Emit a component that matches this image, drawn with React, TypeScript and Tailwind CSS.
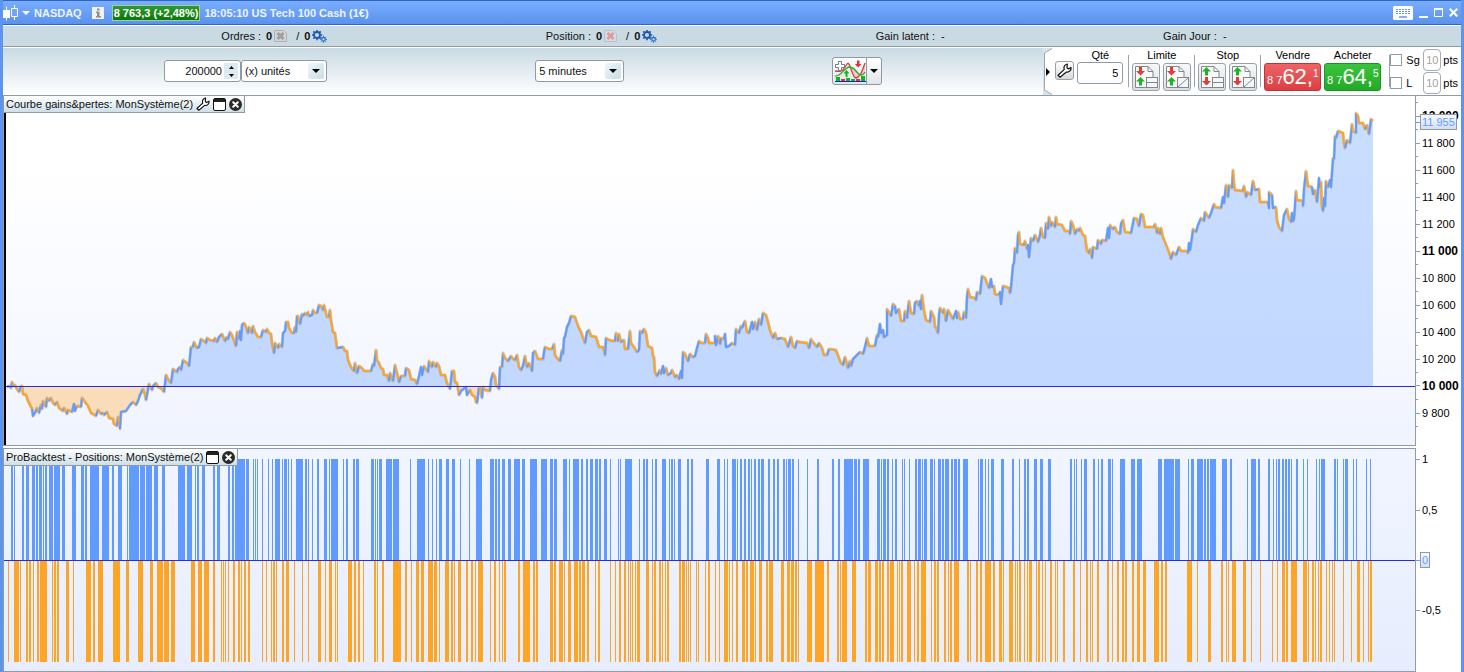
import React from "react";

const EQUITY =
  "7,387 9,386 11,388 12,382 14,386 15,385 17,389 19,392 21,386 22,386 23,394 26,395 28,401 32,409 33,416 36,411 37,408 39,413 41,405 42,409 43,401 46,407 47,398 49,401 51,398 53,403 55,405 57,402 59,408 63,411 64,408 67,414 68,410 72,412 74,404 75,411 77,406 81,407 82,398 85,402 88,406 91,413 93,414 96,416 98,410 101,414 103,413 104,415 107,412 109,418 113,419 114,424 117,426 118,417 120,429 121,412 126,411 130,405 133,402 136,405 138,401 140,395 143,389 145,395 146,400 147,395 149,384 152,390 153,386 156,383 158,387 162,389 164,392 166,375 168,379 171,383 173,369 177,372 178,369 180,367 181,370 183,360 187,363 189,366 191,347 193,347 194,342 197,348 199,347 201,339 204,341 206,343 207,338 210,340 214,341 215,338 217,342 219,337 222,334 225,341 227,337 228,339 230,332 232,335 236,346 237,332 239,339 240,331 241,340 242,325 244,323 246,327 248,333 249,327 252,333 253,326 255,332 258,337 261,337 263,330 266,332 267,329 269,333 271,334 272,343 274,353 275,343 278,348 279,344 282,347 283,333 285,331 286,322 288,322 289,328 292,333 294,333 295,327 296,332 297,316 298,316 300,324 302,314 303,316 305,313 307,315 308,312 309,316 312,315 313,310 315,313 317,313 319,305 321,306 323,310 324,305 326,313 327,317 329,317 330,310 331,320 333,332 335,333 337,348 343,347 345,351 347,351 348,360 351,367 354,371 355,363 357,373 359,366 362,368 364,371 371,371 373,364 374,366 376,350 377,360 379,363 381,368 383,369 384,375 387,375 389,381 390,373 393,381 395,365 397,373 399,382 401,376 405,376 406,368 409,370 411,379 415,380 417,384 419,376 421,367 422,375 424,366 428,372 429,361 432,367 433,362 436,367 437,363 439,366 441,375 445,375 447,383 450,389 452,371 454,371 455,382 457,383 459,395 461,391 466,387 467,395 470,390 472,395 475,397 476,402 477,403 479,388 480,388 482,398 483,387 485,390 490,391 491,380 493,373 495,377 496,385 499,389 500,367 502,367 503,353 505,358 508,361 511,356 513,359 515,360 517,355 519,367 521,370 523,366 525,356 527,367 529,363 531,368 532,371 533,353 535,351 538,359 543,359 544,352 545,347 549,349 552,349 554,344 555,355 557,358 560,361 562,350 563,354 564,338 565,337 567,327 569,323 571,316 575,317 577,323 579,328 581,332 585,343 587,332 589,330 591,336 596,337 597,340 599,347 603,347 605,355 606,338 609,340 613,341 615,341 616,333 618,341 619,334 621,342 624,340 625,349 628,349 630,331 631,343 634,347 637,352 639,350 640,331 642,333 644,329 646,333 648,346 652,348 653,356 654,357 655,372 657,376 660,370 661,374 663,366 664,373 666,368 668,375 671,373 672,370 675,377 677,375 679,379 681,371 682,378 683,352 685,354 688,361 690,354 693,357 695,356 697,348 699,341 701,343 705,343 706,334 708,338 709,343 715,343 715,336 716,345 718,336 720,344 721,338 724,339 725,334 726,347 729,346 732,343 735,345 736,329 739,333 741,326 742,328 745,321 747,332 749,333 752,322 753,329 755,322 757,330 759,319 761,325 763,313 766,315 768,322 770,330 773,338 775,333 777,339 781,338 785,339 788,347 791,337 793,346 795,348 797,341 799,342 807,343 809,348 811,339 813,342 817,347 819,343 822,348 824,355 827,355 829,349 836,350 839,358 841,363 843,365 845,357 848,368 850,361 851,366 853,359 856,356 859,353 860,352 863,354 865,347 867,338 869,346 875,346 877,335 878,337 880,324 881,333 883,330 884,337 887,335 887,309 891,316 893,304 895,306 896,313 899,309 901,321 904,321 905,311 907,318 909,301 911,313 914,314 915,303 917,301 919,306 920,301 921,309 922,295 924,310 926,320 930,322 931,311 934,317 935,327 936,327 938,333 939,315 940,308 943,313 944,309 946,321 948,310 953,319 956,311 957,318 958,312 960,319 963,319 964,312 966,318 967,297 968,289 970,297 975,298 976,300 977,292 980,294 982,276 985,278 989,288 991,279 992,287 994,286 995,294 999,295 1000,292 1001,304 1003,286 1009,288 1010,293 1011,287 1013,265 1014,263 1015,248 1017,253 1018,235 1019,232 1020,244 1024,245 1025,241 1027,249 1028,245 1029,257 1031,238 1033,241 1035,235 1038,242 1040,235 1041,228 1043,237 1045,238 1046,223 1048,229 1049,217 1051,226 1052,222 1054,225 1055,227 1056,217 1057,224 1062,225 1065,231 1069,231 1070,234 1071,221 1073,225 1075,234 1077,229 1079,231 1080,228 1083,235 1085,236 1087,251 1089,253 1090,249 1092,258 1093,247 1097,249 1098,240 1101,244 1102,240 1106,241 1108,228 1109,238 1110,225 1113,229 1115,227 1117,232 1120,234 1121,224 1123,220 1125,232 1131,233 1134,218 1137,219 1139,226 1141,214 1143,215 1145,227 1154,227 1155,224 1157,233 1158,228 1160,234 1161,228 1163,237 1167,247 1169,252 1171,259 1173,252 1176,255 1179,247 1181,251 1187,251 1188,253 1189,243 1190,250 1192,237 1193,229 1196,232 1198,225 1201,218 1204,221 1205,212 1209,218 1211,213 1214,204 1215,207 1221,208 1223,197 1224,203 1226,185 1228,197 1229,185 1232,188 1233,170 1234,183 1235,190 1243,191 1244,186 1246,197 1247,192 1251,195 1253,181 1255,190 1259,189 1260,202 1268,202 1269,208 1269,192 1272,195 1273,208 1276,207 1277,220 1279,227 1282,231 1284,215 1287,209 1289,219 1291,222 1292,213 1293,221 1294,219 1296,191 1297,200 1303,201 1303,206 1304,189 1306,171 1308,186 1312,187 1313,194 1315,190 1317,202 1319,178 1320,187 1321,182 1322,207 1323,211 1324,198 1325,206 1326,181 1328,187 1330,180 1331,187 1333,158 1334,159 1335,136 1336,138 1338,131 1343,133 1344,143 1345,148 1347,140 1350,143 1352,124 1353,131 1356,133 1356,113 1358,116 1359,123 1363,123 1365,129 1367,125 1369,134 1371,119 1373,121";

const LONGS =
  "11 2,14 1,22 2,26 3,32 3,36 2,39 3,43 1,45 2,49 4,54 6,62 3,72 4,81 3,85 2,90 9,102 7,112 2,118 4,127 1,129 10,140 5,146 6,154 4,162 3,178 7,187 5,195 1,197 2,202 3,213 2,217 3,228 2,232 2,235 10,246 3,253 1,255 1,257 1,262 1,268 1,272 1,275 5,282 1,284 3,288 1,291 1,296 7,305 2,308 1,312 1,317 2,324 3,329 1,331 7,343 1,346 2,353 2,356 3,371 3,375 1,377 1,379 3,386 6,393 6,410 1,417 8,428 1,432 1,436 1,439 3,446 3,452 3,460 1,469 1,476 6,490 4,495 2,498 2,502 3,508 3,514 6,522 3,530 7,541 6,550 3,554 3,563 4,569 1,573 6,581 2,586 2,590 3,595 3,599 2,604 3,610 1,618 1,620 1,625 7,639 1,643 2,646 2,652 1,655 2,662 4,669 1,671 2,674 1,678 3,687 2,691 2,706 3,717 3,724 1,727 1,732 4,737 1,740 2,744 2,748 2,751 1,754 2,758 2,761 3,768 2,773 2,777 2,783 2,786 1,788 3,792 2,798 1,807 1,817 2,832 2,838 2,844 9,854 3,858 2,863 6,877 3,881 1,883 3,887 2,892 1,895 2,902 1,904 1,909 1,915 2,918 3,922 1,924 3,930 3,934 1,938 3,942 2,945 4,951 2,954 3,958 2,963 5,978 1,980 3,985 1,988 1,991 3,1001 3,1012 2,1019 1,1024 2,1027 2,1034 3,1040 3,1048 3,1070 2,1074 1,1076 1,1081 1,1084 3,1093 2,1098 1,1101 2,1108 3,1112 1,1120 5,1131 4,1137 5,1158 4,1164 10,1175 5,1188 1,1191 3,1197 6,1204 2,1207 2,1210 6,1222 5,1230 2,1247 1,1251 5,1258 2,1268 2,1273 1,1276 1,1278 2,1282 2,1285 2,1288 2,1291 1,1296 2,1303 1,1307 1,1316 1,1319 1,1321 4,1334 2,1337 1,1343 1,1345 3,1353 1,1356 1,1366 1,1370 1";

const SHORTS =
  "8 1,14 5,20 1,26 2,29 2,33 1,37 2,40 7,52 1,54 2,57 2,66 3,73 1,86 5,93 2,98 5,113 7,126 3,138 5,150 3,157 6,164 5,171 4,191 4,198 4,204 5,213 2,221 1,223 1,225 1,228 1,233 2,238 2,241 1,244 2,248 2,262 1,266 1,271 1,273 2,276 1,282 2,286 3,294 1,302 1,308 1,318 3,325 1,329 3,335 1,337 1,348 4,354 2,358 2,363 1,374 2,377 1,382 2,393 8,405 2,411 1,416 3,421 3,428 5,434 3,439 1,445 4,451 2,454 1,458 3,466 2,471 2,475 1,478 5,490 1,494 2,499 1,502 1,504 2,518 2,523 7,533 2,536 2,550 3,554 2,559 4,564 1,568 3,574 4,579 2,582 3,587 2,595 1,598 2,610 1,615 1,619 2,624 2,628 1,630 1,632 1,635 1,637 3,646 3,652 1,654 2,659 2,662 1,665 1,667 2,679 2,682 3,686 1,688 1,690 1,696 1,698 1,705 1,708 2,715 1,719 1,724 4,729 1,732 1,736 2,742 3,746 2,750 4,755 1,759 3,766 2,769 4,781 3,787 3,791 3,795 2,798 1,807 5,815 9,827 2,837 2,840 1,842 5,852 4,865 2,868 3,875 3,879 2,882 2,887 2,890 4,897 1,899 1,901 2,907 4,914 1,917 2,921 5,931 1,934 2,937 2,944 2,948 1,950 2,954 5,967 2,970 1,976 2,980 2,985 6,993 2,999 3,1003 1,1009 4,1015 1,1017 1,1019 2,1024 1,1027 1,1029 3,1036 1,1038 2,1042 1,1045 1,1050 2,1055 1,1057 1,1063 2,1073 2,1080 1,1086 2,1090 1,1092 1,1097 2,1107 2,1112 1,1117 2,1122 2,1125 2,1132 2,1137 3,1143 3,1154 5,1161 2,1165 2,1187 5,1197 1,1208 3,1221 2,1226 1,1228 1,1232 4,1243 3,1251 1,1260 1,1272 1,1277 1,1282 3,1286 2,1291 6,1303 4,1308 1,1312 2,1315 1,1318 1,1320 2,1326 1,1329 1,1332 1,1334 1,1343 1,1351 1,1357 3,1363 1,1368 1,1370 2";

const points = EQUITY.split(" ").map((p) => p.split(",").map(Number));
const linePath = "M" + EQUITY.split(" ").join("L");
const areaPath = `M${points[0][0]},386L${EQUITY.split(" ").join("L")}L1373,386Z`;

type Run = { gain: boolean; d: string };

// Consecutive steps of the same colour share one path, in drawing order.
function buildRuns(): Run[] {
  const runs: Run[] = [];
  for (let i = 1; i < points.length; i++) {
    const [x0, y0] = points[i - 1];
    const [x1, y1] = points[i];
    const next = points[i + 1];
    const spike = x1 - x0 <= 1 && y1 - y0 >= 6 && next !== undefined && next[1] < y1;
    const gain = y1 < y0 || spike;
    const last = runs[runs.length - 1];
    if (last && last.gain === gain) last.d += `L${x1},${y1}`;
    else runs.push({ gain, d: `M${x0},${y0}L${x1},${y1}` });
  }
  return runs;
}
const runs = buildRuns();

const bars = (data: string, y: number, h: number) =>
  data
    .split(",")
    .map((b) => {
      const [x, w] = b.split(" ");
      return `M${x},${y}h${w}v${h}h-${w}z`;
    })
    .join("");

function Gears() {
  const teeth = (cx: number, cy: number, r: number, n: number) =>
    Array.from({ length: n }, (_, i) => {
      const a = (i * 2 * Math.PI) / n;
      return `M${cx + Math.cos(a) * r},${cy + Math.sin(a) * r}L${cx + Math.cos(a) * (r + 1.8)},${cy + Math.sin(a) * (r + 1.8)}`;
    }).join("");
  return (
    <svg width="15" height="13" viewBox="0 0 15 13" fill="none" aria-hidden="true">
      <circle cx="5" cy="5" r="3" stroke="#1d55b8" strokeWidth="1.8" />
      <path d={teeth(5, 5, 3.4, 8)} stroke="#1d55b8" strokeWidth="1.6" />
      <circle cx="11.5" cy="9.3" r="1.8" stroke="#2f78cc" strokeWidth="1.3" />
      <path d={teeth(11.5, 9.3, 1.8, 8)} stroke="#2f78cc" strokeWidth="1" />
    </svg>
  );
}

function CancelDoc({ red }: { red?: boolean }) {
  return (
    <svg width="13" height="12" viewBox="0 0 13 12" aria-hidden="true">
      <path d="M.5.5h9l3 3v8H.5z" fill={red ? "#d6dbe4" : "#d5d5d5"} stroke={red ? "#b4c1ce" : "#b0b0b0"} />
      <path d="M3.5 3l6 6M9.5 3l-6 6" stroke={red ? "#e39a9f" : "#9f9f9f"} strokeWidth="3" />
    </svg>
  );
}

function Wrench({ size }: { size: number }) {
  return (
    <svg width={size} height={size} viewBox="0 0 15 15" fill="#fff" stroke="#111" strokeWidth="1.2" strokeLinejoin="round" aria-hidden="true">
      <path d="M1 12.300 7.200 6.600C6.500 4 7.800 1.700 10.300 1L10 4.800l1.400 1.200L14 4.500c.4 2.600-1.700 5-4.600 4.500L3 14.200z" />
    </svg>
  );
}

function WindowIcon() {
  return (
    <svg width="13" height="13" viewBox="0 0 13 13" aria-hidden="true">
      <rect x=".5" y=".5" width="12" height="12" rx="1.5" fill="#fff" stroke="#111" />
      <path d="M1 1h11v3H1z" fill="#222" />
    </svg>
  );
}

function CloseIcon() {
  return (
    <svg width="13" height="13" viewBox="0 0 13 13" aria-hidden="true">
      <circle cx="6.5" cy="6.5" r="6.5" fill="#2b2b2b" />
      <path d="M4.200 4.200l4.600 4.600M8.800 4.200L4.200 8.800" stroke="#fff" strokeWidth="2" strokeLinecap="round" />
    </svg>
  );
}

const Caret = () => (
  <svg width="8" height="4" viewBox="0 0 8 4" aria-hidden="true">
    <path d="M0 0h8L4 4z" fill="#000" />
  </svg>
);

function OrderIcon({ down, slash }: { down?: boolean; slash?: boolean }) {
  const downArrow = "M4 0h3v4h3L5.500 8.500 1 4h3z";
  const upArrow = "M5.500 0L10 4.500H7V8.500H4V4.500H1z";
  return (
    <svg width="24" height="24" viewBox="0 0 24 24" aria-hidden="true">
      <path d="M1.500 22.500v-21H14l5 5v16z" fill="#fafafa" stroke="#7d8890" />
      <path d="M14 1.500v5h5" fill="none" stroke="#7d8890" />
      <path d={down ? downArrow : upArrow} transform="translate(1 2)" fill={down ? "#e53a3a" : "#1fb324"} />
      <path d={down ? upArrow : downArrow} transform="translate(1 12)" fill={down ? "#1fb324" : "#e53a3a"} />
      <rect x="12.5" y="12.500" width="11" height="10" fill="#f4f6f7" stroke="#7d8890" />
      <path d={slash ? "M13 22l10-9" : "M12 17.500h11"} stroke="#7d8890" />
    </svg>
  );
}

function SelectBox({ label, value, options }: { label: string; value: string; options: string[] }) {
  return (
    <div className="relative flex h-[22px] w-full items-center rounded-[3px] border border-[#8f9ba4] bg-white">
      <select aria-label={label} defaultValue={value} className="h-full w-full appearance-none bg-transparent pl-[3px] pr-5 text-[11px] outline-none">
        {options.map((o) => (
          <option key={o}>{o}</option>
        ))}
      </select>
      <span className="pointer-events-none absolute inset-y-0.5 right-0.5 flex w-4 items-center justify-center rounded-[2px] bg-linear-to-br from-[#eef7fa] to-[#c8dde6]">
        <Caret />
      </span>
    </div>
  );
}

function OrderGroup({ title, down }: { title: string; down?: boolean }) {
  return (
    <div className="flex flex-col items-center">
      <span className="h-[15px] leading-[14px]">{title}</span>
      <div className="flex gap-[3px]">
        {[false, true].map((slash) => (
          <button
            key={String(slash)}
            aria-label={`${title} ${slash ? "sans" : "avec"} quantité`}
            className="flex size-7 items-center justify-center rounded-[3px] border border-[#98a1a7] bg-linear-to-b from-[#f8f8f8] to-[#dcdfe1]"
          >
            <OrderIcon down={down} slash={slash} />
          </button>
        ))}
      </div>
    </div>
  );
}

function Price({ title, big, sup, tone }: { title: string; big: string; sup: string; tone: string }) {
  return (
    <div className="flex flex-col items-center">
      <span className="h-[15px] leading-[14px]">{title}</span>
      <button
        aria-label={`${title} 8 7${big}${sup}`}
        className={`flex h-7 w-[57px] items-end justify-center rounded-[3px] border pb-[3px] text-white ${tone}`}
      >
        <span className="text-[11px] leading-[13px]">8 7</span>
        <span className="text-[22px] leading-[21px]">{big}</span>
        <span className="self-start pt-1 text-[10px] leading-[12px]">{sup}</span>
      </button>
    </div>
  );
}

function PtsRow({ name }: { name: string }) {
  return (
    <div className="flex items-center">
      <label className="flex w-[33px] items-center gap-1">
        <input type="checkbox" className="size-3 shrink-0 appearance-none border border-[#8f9ba4] bg-white" />
        {name}
      </label>
      <label className="flex items-center gap-0.5">
        <input
          type="text"
          defaultValue="10"
          className="h-[22px] w-[18px] rounded-[4px] border border-[#a3adb5] bg-white text-center text-[11px] text-[#a2a2a2] outline-none"
        />
        pts
      </label>
    </div>
  );
}

const Divider = () => <span className="mt-[7px] h-8 w-px bg-[#98a4ad]" />;

type Tick = { at: number; label?: string; bold?: boolean };

function Axis({ ticks, marker }: { ticks: Tick[]; marker: { at: number; label: string } }) {
  return (
    <div className="relative w-[45px] shrink-0 bg-white text-black">
      {ticks.map((t) => (
        <div key={t.at} className="absolute left-0 flex h-0 items-center gap-0.5" style={{ top: `${t.at}%` }}>
          <span className={t.label ? "h-px w-1 bg-[#909ba5]" : "h-px w-0.5 bg-[#909ba5]"} />
          {t.label && (
            <span className={t.bold ? "whitespace-nowrap text-[12px] font-bold" : "whitespace-nowrap text-[11px]"}>{t.label}</span>
          )}
        </div>
      ))}
      <div className="absolute left-0 flex h-0 items-center" style={{ top: `${marker.at}%` }}>
        <span className="h-px w-1 bg-[#629bff]" />
        <span className="h-4 whitespace-nowrap border border-[#8f9ba4] bg-linear-to-b from-[#f6f9ff] to-[#d3dff2] px-px text-[11px] leading-[14px] text-[#629bff]">
          {marker.label}
        </span>
      </div>
    </div>
  );
}

const equityY = (y: number) => ((y - 96) / 350) * 100;
const equityTicks: Tick[] = [];
for (let i = 0; i <= 24; i++) {
  const value = 12100 - i * 100;
  const y = 386 - ((value - 10000) * 135) / 1000;
  const major = value % 200 === 0 && value > 9600;
  equityTicks.push({
    at: equityY(y),
    label: major ? `${Math.floor(value / 1000)} ${String(value % 1000).padStart(3, "0")}` : undefined,
    bold: value % 1000 === 0,
  });
}

const posY = (y: number) => ((y - 448) / 224) * 100;
const posTicks: Tick[] = [
  { at: posY(459), label: "1" },
  { at: posY(510), label: "0,5" },
  { at: posY(610), label: "-0,5" },
];

function PanelTitle({ text, wrench }: { text: string; wrench?: boolean }) {
  return (
    <div className="absolute left-0 top-0 flex h-[17px] items-center gap-[3px] border-b border-r border-[#8f9ba4] bg-linear-to-b from-white to-[#cfdfe7] px-0.5">
      <h2 className="text-[11px] leading-4">{text}</h2>
      {wrench && (
        <button aria-label="Paramètres">
          <Wrench size={14} />
        </button>
      )}
      <button aria-label="Agrandir">
        <WindowIcon />
      </button>
      <button aria-label="Fermer le graphique">
        <CloseIcon />
      </button>
    </div>
  );
}

export default function App() {
  return (
    <div className="flex h-screen flex-col overflow-hidden border-x-[3px] border-[#5c94ee] bg-white font-['Liberation_Sans',Arial,sans-serif] text-[11px] leading-[14px] text-[#111]">
      <header className="flex h-[25px] shrink-0 items-center border-y border-[#2f66c0] bg-linear-to-b from-[#78adff] to-[#5b92ec] font-bold text-[#eef4ff]">
        <svg width="16" height="18" viewBox="0 0 16 18" fill="none" aria-hidden="true">
          <path d="M3.500 2.500v14" stroke="#fff" />
          <path d="M0 6h7v8H0z" fill="#fff" />
          <path d="M11.500 1v15" stroke="#fff" />
          <path d="M8.500 4.500h6v8h-6z" fill="#6ea4fa" stroke="#fff" />
        </svg>
        <button aria-label="Menu" className="flex items-center gap-1 pl-[3px]">
          <svg width="8" height="4" viewBox="0 0 8 4" aria-hidden="true">
            <path d="M0 0h8L4 4z" fill="#fff" />
          </svg>
          <span>NASDAQ</span>
        </button>
        <svg className="ml-2.5" width="12" height="12" viewBox="0 0 12 12" aria-hidden="true">
          <path d="M0 0h12v12H0z" fill="#f1f1ee" />
          <path d="M5 1.500h2.500v2H5zM4 4.500h3.500V9H9v1.500H4V9h1V6H4z" fill="#8a8f94" />
        </svg>
        <span className="ml-2 border border-[#9fd0a0] bg-linear-to-b from-[#2e9a30] to-[#077807] px-px text-white">8 763,3 (+2,48%)</span>
        <span className="ml-1 flex-1 whitespace-nowrap">18:05:10 US Tech 100 Cash (1€)</span>
        <div className="flex items-center gap-1.5 pr-[3px]">
          <button aria-label="Clavier">
            <svg width="20" height="14" viewBox="0 0 20 14" aria-hidden="true">
              <rect width="20" height="14" rx="1.5" fill="#fff" />
              <path d="M3 3.500h14M3 5.500h14M3 7.500h14" stroke="#6096f0" strokeDasharray="2 1" />
              <path d="M6 11h8" stroke="#6096f0" strokeWidth="1.5" />
            </svg>
          </button>
          <button aria-label="Réduire">
            <svg width="9" height="10" viewBox="0 0 9 10" aria-hidden="true">
              <path d="M0 9h9" stroke="#fff" strokeWidth="2" />
            </svg>
          </button>
          <button aria-label="Agrandir la fenêtre">
            <svg width="9" height="9" viewBox="0 0 9 9" aria-hidden="true">
              <path d="M.5 1h8v7.500h-8z" fill="none" stroke="#fff" />
              <path d="M0 1h9" stroke="#fff" strokeWidth="2" />
            </svg>
          </button>
          <button aria-label="Fermer">
            <svg width="9" height="9" viewBox="0 0 9 9" aria-hidden="true">
              <path d="M.7.7l7.600 7.600M8.300.7L.7 8.300" stroke="#fff" strokeWidth="2" />
            </svg>
          </button>
        </div>
      </header>

      <section className="mt-px flex h-[21px] shrink-0 items-center justify-evenly border-b border-[#909ba5] bg-[#c9dae3] pr-4">
        <div className="flex items-center gap-0.5">
          <span>Ordres :</span>
          <b className="ml-[3px]">0</b>
          <CancelDoc />
          <span className="ml-[7px]">/</span>
          <b className="ml-[3px]">0</b>
          <Gears />
        </div>
        <div className="flex items-center gap-0.5">
          <span>Position :</span>
          <b className="ml-[3px]">0</b>
          <CancelDoc red />
          <span className="ml-[7px]">/</span>
          <b className="ml-[3px]">0</b>
          <Gears />
        </div>
        <span className="whitespace-pre">Gain latent :  -</span>
        <span className="whitespace-pre">Gain Jour :  -</span>
      </section>

      <section className="mt-px flex h-[48px] shrink-0 border-b border-[#909ba5] bg-linear-to-b from-[#c9dae3] to-white">
        <div className="flex flex-1 items-center justify-between px-[161px] pb-px">
          <div className="flex">
            <div className="relative flex h-[22px] w-[77px] items-center rounded-[3px] border border-[#8f9ba4] bg-white">
              <input
                type="text"
                aria-label="Nombre d'unités"
                defaultValue="200000"
                className="h-full w-full bg-transparent pr-[18px] text-right text-[11px] outline-none"
              />
              <span className="absolute inset-y-0.5 right-0.5 flex w-3.5 flex-col items-center justify-center bg-[#dcebf1]">
                <button aria-label="Augmenter" className="flex h-2 items-center">
                  <svg width="5" height="3" viewBox="0 0 5 3" aria-hidden="true">
                    <path d="M0 3h5L2.500 0z" />
                  </svg>
                </button>
                <button aria-label="Diminuer" className="flex h-2 items-center">
                  <svg width="5" height="3" viewBox="0 0 5 3" aria-hidden="true">
                    <path d="M0 0h5L2.500 3z" />
                  </svg>
                </button>
              </span>
            </div>
            <div className="w-[86px]">
              <SelectBox label="Type d'unité" value="(x) unités" options={["(x) unités", "(x) jours"]} />
            </div>
          </div>
          <div className="w-[89px]">
            <SelectBox label="Unité de temps" value="5 minutes" options={["1 minute", "5 minutes", "15 minutes"]} />
          </div>
          <div className="flex h-7 w-[50px] overflow-hidden rounded-[3px] border border-[#8f9ba4] bg-linear-to-b from-white to-[#e2e6e9]">
            <button aria-label="Indicateurs" className="flex flex-1 items-center justify-center border-r border-[#8f9ba4]">
              <svg width="32" height="24" viewBox="0 0 32 24" fill="none" aria-hidden="true">
                <path d="M2 15c5 4 8 2 11-7 4-6 5 9 10 11 4-1 5-6 8-14v9c-4 4-5 0-9-3-4-5-9-3-12 2-3 4-5 3-8 2z" fill="#f6caca" />
                <path d="M1 12c5 0 6 3 12-7 3-4 5 14 9 14 4-1 6-6 9-15" stroke="#d93a3a" strokeWidth="1.3" />
                <path d="M1 17c6 1 9-9 15-9 6 1 7 8 11 8 2 0 3-1 4-3" stroke="#2cae34" strokeWidth="1.3" />
                <path d="M4.500 2.500h3v3h3v3h-3v3h-3v-3h-3v-3h3z" fill="#fff" stroke="#6c7f92" />
                <path d="M12.500 11l3 3.500h-2V18h-2v-3.500h-2z" fill="#12b51a" />
                <path d="M24 8.500L21 5h2V1.500h2.500V5h2z" fill="#e73030" />
                <path d="M1 22.500h31" stroke="#1d1dd8" />
                <path d="M2 18h4v4H2zM12 19h4v3h-4zM17 20h4v2h-4zM27 17h4v5h-4z" fill="#12b51a" />
                <path d="M7 20h4v2H7zM22 20h4v2h-4z" fill="#e73030" />
              </svg>
            </button>
            <button aria-label="Liste des indicateurs" className="flex w-3.5 items-center justify-center">
              <Caret />
            </button>
          </div>
        </div>

        <div className="flex items-start bg-white pr-[3px] text-black">
          <button aria-label="Réduire le panneau" className="mr-[3px] h-[47px] w-[9px]">
            <svg width="9" height="47" viewBox="0 0 9 47" aria-hidden="true">
              <path d="M0 0h9L1.500 5v37L9 47H0z" fill="#d8e4ea" />
              <path d="M9 .5L1.500 5v37L9 46.500" fill="none" stroke="#9aa5ad" />
              <path d="M3 20v8l4-4z" />
            </svg>
          </button>
          <button
            aria-label="Réglages"
            className="mr-[3px] mt-[13px] flex size-[19px] items-center justify-center rounded-[3px] border border-[#98a1a7] bg-linear-to-b from-white to-[#d5dadd]"
          >
            <Wrench size={15} />
          </button>
          <label className="mr-[5px] flex w-[46px] flex-col items-center">
            <span className="h-[14px]">Qté</span>
            <input type="text" defaultValue="5" className="h-[22px] w-full rounded-[3px] border border-[#8f9ba4] bg-white px-1 text-right text-[11px] outline-none" />
          </label>
          <div className="flex items-start gap-[3px]">
            <Divider />
            <OrderGroup title="Limite" down />
            <Divider />
            <OrderGroup title="Stop" />
            <Divider />
            <Price title="Vendre" big="62," sup="1" tone="border-[#bd3338] bg-linear-to-b from-[#ee6366] to-[#dc3e42]" />
            <Price title="Acheter" big="64," sup="5" tone="border-[#189420] bg-linear-to-b from-[#3ac43c] to-[#22aa27]" />
          </div>
          <div className="ml-2 flex items-start">
            <Divider />
            <div className="mt-px flex flex-col gap-px">
              <PtsRow name="Sg" />
              <PtsRow name="L" />
            </div>
          </div>
        </div>
      </section>

      <main className="grid min-h-0 flex-1 grid-rows-[350fr_224fr] gap-0.5">
        <section className="flex min-h-0">
          <div className="relative min-w-0 flex-1 border-x border-b border-[#909ba5] bg-linear-to-b from-white from-20% to-[#f0f4ff]">
            <svg className="block h-full w-full" viewBox="4 96 1411 349" preserveAspectRatio="none" role="img" aria-label="Courbe gains et pertes">
              <clipPath id="above">
                <path d="M4 96h1411v290H4z" />
              </clipPath>
              <clipPath id="below">
                <path d="M4 386h1411v59H4z" />
              </clipPath>
              <path d={areaPath} fill="#629bff" fillOpacity=".34" clipPath="url(#above)" />
              <path d={areaPath} fill="#f9dcb9" clipPath="url(#below)" />
              <g fill="none" strokeLinejoin="round">
                <path d={linePath} stroke="#8d8d8d" strokeOpacity=".45" strokeWidth="3" vectorEffect="non-scaling-stroke" />
                {runs.map((run, i) => (
                  <path key={i} d={run.d} stroke={run.gain ? "#629bff" : "#ffa522"} strokeWidth="2" vectorEffect="non-scaling-stroke" />
                ))}
              </g>
              <path d="M4 386h1411v1H4z" fill="#2a2adf" shapeRendering="crispEdges" />
              <path d="M4 113h2v332H4z" fill="#000" shapeRendering="crispEdges" />
            </svg>
            <PanelTitle text="Courbe gains&pertes: MonSystème(2)" wrench />
          </div>
          <Axis ticks={equityTicks} marker={{ at: equityY(122), label: "11 955" }} />
        </section>

        <section className="flex min-h-0">
          <div className="relative min-w-0 flex-1 border border-[#909ba5] bg-linear-to-b from-[#f1f5ff] to-[#e7edfe]">
            <svg className="block h-full w-full" viewBox="4 449 1411 222" preserveAspectRatio="none" role="img" aria-label="Positions">
              <g shapeRendering="crispEdges">
                <path d={bars(LONGS, 459, 101)} fill="#629bff" />
                <path d={bars(SHORTS, 561, 101)} fill="#ffa526" />
                <path d="M4 560h1411v1H4z" fill="#2a2adf" />
              </g>
            </svg>
            <PanelTitle text="ProBacktest - Positions: MonSystème(2)" />
          </div>
          <Axis ticks={posTicks} marker={{ at: posY(560), label: "0" }} />
        </section>
      </main>
    </div>
  );
}
